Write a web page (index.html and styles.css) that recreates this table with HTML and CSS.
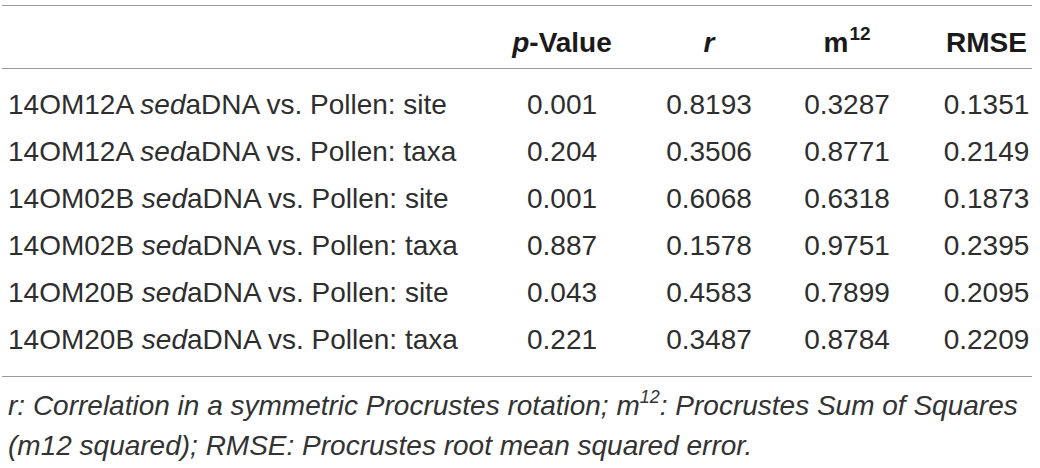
FILE: index.html
```html
<!DOCTYPE html>
<html>
<head>
<meta charset="utf-8">
<link rel="stylesheet" href="styles.css">
</head>
<body>
<div class="wrap">
  <div class="grid head">
    <div class="cell label"></div>
    <div class="cell num"><i>p</i>-Value</div>
    <div class="cell num"><i>r</i></div>
    <div class="cell num">m<sup>12</sup></div>
    <div class="cell num">RMSE</div>
  </div>
  <div class="grid body">
    <div class="cell label">14OM12A <i>sed</i>aDNA vs. Pollen: site</div>
    <div class="cell num">0.001</div>
    <div class="cell num">0.8193</div>
    <div class="cell num">0.3287</div>
    <div class="cell num">0.1351</div>

    <div class="cell label">14OM12A <i>sed</i>aDNA vs. Pollen: taxa</div>
    <div class="cell num">0.204</div>
    <div class="cell num">0.3506</div>
    <div class="cell num">0.8771</div>
    <div class="cell num">0.2149</div>

    <div class="cell label">14OM02B <i>sed</i>aDNA vs. Pollen: site</div>
    <div class="cell num">0.001</div>
    <div class="cell num">0.6068</div>
    <div class="cell num">0.6318</div>
    <div class="cell num">0.1873</div>

    <div class="cell label">14OM02B <i>sed</i>aDNA vs. Pollen: taxa</div>
    <div class="cell num">0.887</div>
    <div class="cell num">0.1578</div>
    <div class="cell num">0.9751</div>
    <div class="cell num">0.2395</div>

    <div class="cell label">14OM20B <i>sed</i>aDNA vs. Pollen: site</div>
    <div class="cell num">0.043</div>
    <div class="cell num">0.4583</div>
    <div class="cell num">0.7899</div>
    <div class="cell num">0.2095</div>

    <div class="cell label">14OM20B <i>sed</i>aDNA vs. Pollen: taxa</div>
    <div class="cell num">0.221</div>
    <div class="cell num">0.3487</div>
    <div class="cell num">0.8784</div>
    <div class="cell num">0.2209</div>
  </div>
  <p class="note"><i>r</i>: Correlation in a symmetric Procrustes rotation; m<sup>12</sup>: Procrustes Sum of Squares (m12 squared); RMSE: Procrustes root mean squared error.</p>
</div>
</body>
</html>
```

FILE: styles.css
```css
html, body {
  margin: 0;
  padding: 0;
  background: #ffffff;
}

body {
  font-family: "Liberation Sans", Arial, sans-serif;
  color: #2e2e2e;
}

.wrap {
  margin: 5px 0 0 2px;
  width: 1030px;
  border-top: 1px solid #9a9a9a;
}

.grid {
  display: grid;
  grid-template-columns: 1fr 106px 88px 88px 91px;
  column-gap: 50px;
  font-size: 28px;
}

.head {
  font-weight: bold;
  color: #1a1a1a;
  line-height: 32px;
  padding: 21px 0 9px;
  border-bottom: 1px solid #9a9a9a;
}

.head sup {
  font-size: 19px;
  line-height: 0;
  vertical-align: 12px;
  margin-left: 1px;
}

.body {
  line-height: 47px;
  padding: 12px 0 13px;
  border-bottom: 1px solid #9a9a9a;
}

.cell {
  white-space: nowrap;
}

.label {
  padding-left: 6px;
}

.num {
  text-align: center;
}

.note {
  margin: 0;
  padding: 9px 0 0 6px;
  font-style: italic;
  font-size: 28px;
  line-height: 40px;
  color: #333333;
}

.note sup {
  font-size: 18px;
  line-height: 0;
  vertical-align: 12px;
}
```
